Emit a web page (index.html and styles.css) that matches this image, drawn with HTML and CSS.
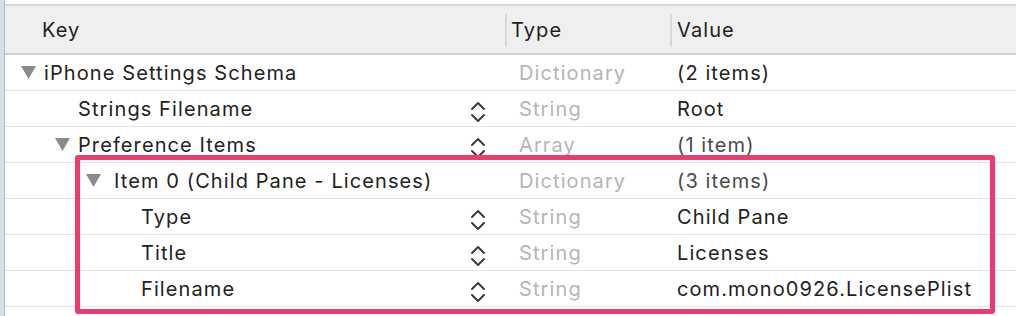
FILE: index.html
```html
<!DOCTYPE html>
<html lang="en">
<head>
    <meta charset="UTF-8">
    <meta name="viewport" content="width=device-width, initial-scale=1.0">
    <title>Root.plist</title>
    <link rel="stylesheet" href="styles.css">
</head>
<body>
    <div class="window">
        <div class="sidebar"></div>
        <div class="editor">
            <div class="header">
                <div class="col key-col">Key</div>
                <div class="col type-col">Type</div>
                <div class="col value-col">Value</div>
            </div>

            <div class="row">
                <div class="key level-0"><span class="disclosure"><svg width="15" height="13" viewBox="0 0 15 13"><polygon points="0,0 15,0 7.5,13"/></svg></span><span class="label">iPhone Settings Schema</span></div>
                <div class="type">Dictionary</div>
                <div class="value">(2 items)</div>
            </div>
            <div class="row">
                <div class="key level-1"><span class="disclosure"></span><span class="label">Strings Filename</span><span class="stepper"><svg width="16" height="22" viewBox="0 0 16 22"><polyline points="2,8 8,2 14,8"/><polyline points="2,14 8,20 14,14"/></svg></span></div>
                <div class="type">String</div>
                <div class="value">Root</div>
            </div>
            <div class="row">
                <div class="key level-1"><span class="disclosure"><svg width="15" height="13" viewBox="0 0 15 13"><polygon points="0,0 15,0 7.5,13"/></svg></span><span class="label">Preference Items</span><span class="stepper"><svg width="16" height="22" viewBox="0 0 16 22"><polyline points="2,8 8,2 14,8"/><polyline points="2,14 8,20 14,14"/></svg></span></div>
                <div class="type">Array</div>
                <div class="value count">(1 item)</div>
            </div>
            <div class="row">
                <div class="key level-2"><span class="disclosure"><svg width="15" height="13" viewBox="0 0 15 13"><polygon points="0,0 15,0 7.5,13"/></svg></span><span class="label">Item 0 (Child Pane - Licenses)</span></div>
                <div class="type">Dictionary</div>
                <div class="value count">(3 items)</div>
            </div>
            <div class="row">
                <div class="key level-3"><span class="label">Type</span><span class="stepper"><svg width="16" height="22" viewBox="0 0 16 22"><polyline points="2,8 8,2 14,8"/><polyline points="2,14 8,20 14,14"/></svg></span></div>
                <div class="type">String</div>
                <div class="value">Child Pane</div>
            </div>
            <div class="row">
                <div class="key level-3"><span class="label">Title</span><span class="stepper"><svg width="16" height="22" viewBox="0 0 16 22"><polyline points="2,8 8,2 14,8"/><polyline points="2,14 8,20 14,14"/></svg></span></div>
                <div class="type">String</div>
                <div class="value">Licenses</div>
            </div>
            <div class="row">
                <div class="key level-3"><span class="label">Filename</span><span class="stepper"><svg width="16" height="22" viewBox="0 0 16 22"><polyline points="2,8 8,2 14,8"/><polyline points="2,14 8,20 14,14"/></svg></span></div>
                <div class="type">String</div>
                <div class="value">com.mono0926.LicensePlist</div>
            </div>
            <div class="row"></div>
        </div>

        <div class="highlight"></div>
    </div>
</body>
</html>
```

FILE: styles.css
```css
body {
    margin: 0;
    background: #fff;
    font-family: Inter, "Liberation Sans", sans-serif;
    font-size: 20px;
    letter-spacing: 1.1px;
    color: #222;
}

.window {
    position: relative;
    display: flex;
    width: 1016px;
    height: 316px;
    overflow: hidden;
}

.sidebar {
    width: 4px;
    background: #d6dfe8;
    border-right: 1px solid #b4bcc5;
    flex-shrink: 0;
}

.editor {
    flex: 1;
    padding-top: 4px;
    background: #fff;
}

.header {
    display: grid;
    grid-template-columns: 500px 165px 1fr;
    height: 47px;
    background: #efefef;
    border-top: 2px solid #d6d6d6;
    border-bottom: 2px solid #d2d2d2;
    color: #1e1e1e;
}

.col {
    display: flex;
    align-items: center;
    position: relative;
    padding-top: 1px;
}

.key-col {
    padding-left: 37px;
}

.type-col {
    padding-left: 6px;
}

.value-col {
    padding-left: 7px;
}

.type-col::before,
.value-col::before {
    content: "";
    position: absolute;
    left: 0;
    top: 8px;
    bottom: 6px;
    width: 2px;
    background: #d9d9d9;
}

.row {
    display: grid;
    grid-template-columns: 500px 165px 1fr;
    height: 35px;
    border-bottom: 1px solid #e4e4e4;
}

.key,
.type,
.value {
    display: flex;
    align-items: center;
    white-space: nowrap;
}

.key {
    color: #222;
}

.level-0 {
    padding-left: 16px;
}

.level-1 {
    padding-left: 50px;
}

.level-2 {
    padding-left: 81px;
}

.level-3 {
    padding-left: 136px;
}

.disclosure {
    display: inline-flex;
    width: 23px;
    flex-shrink: 0;
}

.level-2 .disclosure {
    width: 28px;
}

.disclosure svg {
    fill: #8b8b8b;
}

.label {
    flex: 1;
}

.stepper {
    display: flex;
    margin-right: 19px;
    margin-top: 6px;
}

.stepper svg {
    fill: none;
    stroke: #3d3d3d;
    stroke-width: 2;
    stroke-linecap: round;
    stroke-linejoin: round;
}

.type {
    padding-left: 14px;
    color: #b5b5b5;
}

.value {
    padding-left: 7px;
    color: #222;
}

.value.count {
    color: #4a4a4a;
}

/* annotation box drawn over the rows */
.highlight {
    position: absolute;
    left: 75px;
    top: 155px;
    width: 910px;
    height: 149px;
    border: 5px solid #ee3a6f;
    border-radius: 3px;
}
```
